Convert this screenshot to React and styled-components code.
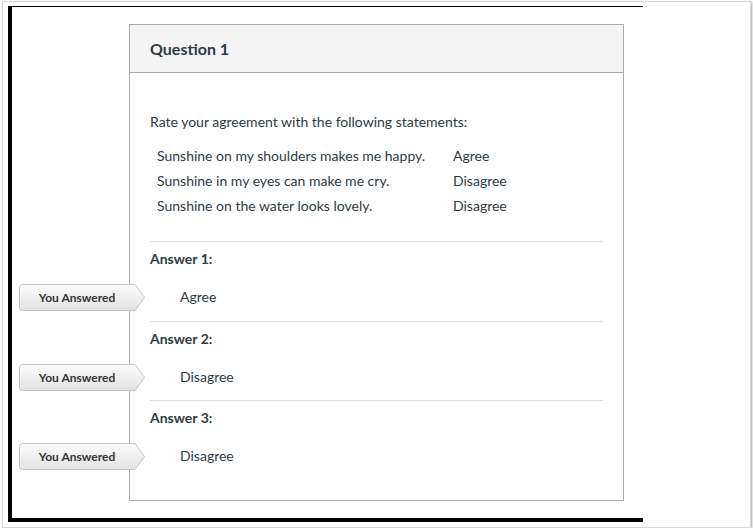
import React from "react";
import styled, { createGlobalStyle } from "styled-components";

const Global = createGlobalStyle`
  html, body { margin: 0; padding: 0; background: #ffffff; }
  body { font-family: Lato, "Noto Sans", "Liberation Sans", sans-serif; color: #2d3b45; }
  * { box-sizing: border-box; }
`;

const Frame = styled.div`
  margin: 1px 0 0 2px;
  width: 749px;
  height: 527px;
  border: 1px solid #d6d6d6;
  box-shadow: 1px 1px 2px rgba(0, 0, 0, 0.35);
  background: #fff;
  padding: 4px 0 0 5px;
`;

const Shot = styled.div`
  width: 635px;
  height: 516px;
  border-left: 4px solid #000;
  border-top: 1px solid #000;
  border-bottom: 4px solid #000;
  padding: 17px 0 0 117px;
`;

const Card = styled.section`
  width: 495px;
  border: 1px solid #aaaaaa;
  background: #fff;
`;

const Header = styled.header`
  height: 48px;
  background: #f4f4f4;
  border-bottom: 1px solid #aaaaaa;
  display: flex;
  align-items: center;
  padding: 0 20px;
`;

const Title = styled.h2`
  margin: 0;
  font-size: 16px;
  font-weight: 700;
  color: #2d3b45;
`;

const Body = styled.div`
  padding: 39px 20px 31px 20px;
  font-size: 14px;
  line-height: 20px;
`;

const Prompt = styled.p`
  margin: 0;
`;

const Statements = styled.div`
  margin: 11px 0 23px 7px;
  display: grid;
  grid-template-columns: 296px auto;
  grid-auto-rows: 25px;
  line-height: 25px;
`;

const Block = styled.div`
  border-top: 1px solid #dddddd;
  padding-top: 7px;
  & + & { margin-top: 10.5px; }
`;

const Label = styled.div`
  font-weight: 700;
  height: 20px;
`;

const AnswerRow = styled.div`
  position: relative;
  margin-top: 15px;
  height: 26px;
  line-height: 26px;
  padding-left: 30px;
`;

const Badge = styled.div`
  position: absolute;
  left: -131px;
  top: 0;
  width: 127px;
  height: 27px;
`;

const BadgeShape = styled.svg`
  position: absolute;
  left: 0;
  top: 0;
`;

const BadgeText = styled.span`
  position: relative;
  display: block;
  width: 116px;
  text-align: center;
  font-size: 12px;
  font-weight: 700;
  line-height: 27px;
  color: #333;
`;

function YouAnswered({ id }) {
  return (
    <Badge>
      <BadgeShape width="127" height="27" viewBox="0 0 127 27">
        <defs>
          <linearGradient id={id} x1="0" y1="0" x2="0" y2="1">
            <stop offset="0" stopColor="#fbfbfb" />
            <stop offset="1" stopColor="#e3e3e3" />
          </linearGradient>
        </defs>
        <path
          d="M3.5 0.5 H116 L125.5 13.5 L116 26.5 H3.5 Q0.5 26.5 0.5 23.5 V3.5 Q0.5 0.5 3.5 0.5 Z"
          fill={`url(#${id})`}
          stroke="#c2c2c2"
          strokeWidth="1"
        />
      </BadgeShape>
      <BadgeText>You Answered</BadgeText>
    </Badge>
  );
}

const statements = [
  ["Sunshine on my shoulders makes me happy.", "Agree"],
  ["Sunshine in my eyes can make me cry.", "Disagree"],
  ["Sunshine on the water looks lovely.", "Disagree"],
];

export default function App() {
  return (
    <>
      <Global />
      <Frame>
        <Shot>
          <Card>
            <Header>
              <Title>Question 1</Title>
            </Header>
            <Body>
              <Prompt>Rate your agreement with the following statements:</Prompt>
              <Statements>
                {statements.map(([s, a]) => (
                  <React.Fragment key={s}>
                    <span>{s}</span>
                    <span>{a}</span>
                  </React.Fragment>
                ))}
              </Statements>
              {statements.map(([s, a], i) => (
                <Block key={s}>
                  <Label>Answer {i + 1}:</Label>
                  <AnswerRow>
                    <YouAnswered id={`g${i}`} />
                    {a}
                  </AnswerRow>
                </Block>
              ))}
            </Body>
          </Card>
        </Shot>
      </Frame>
    </>
  );
}
